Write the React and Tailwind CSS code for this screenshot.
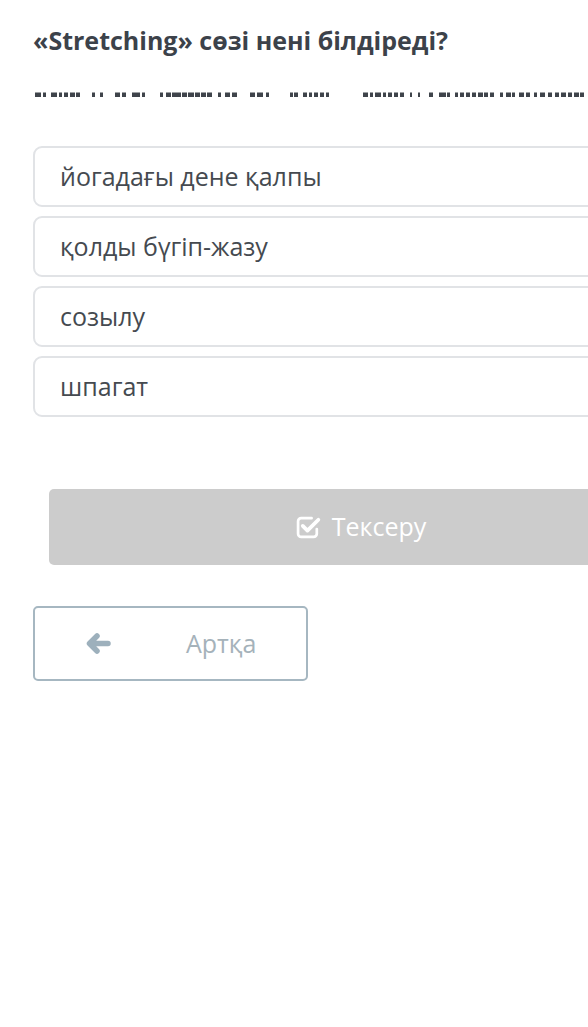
const options = ["йогадағы дене қалпы", "қолды бүгіп-жазу", "созылу", "шпагат"];

// the garbled dashed line under the question
const dashes = [
  [35, 6], [43, 3], [51, 6], [59, 3], [64, 4], [70, 5], [76, 4],
  [92, 3], [100, 3], [115, 5], [122, 4], [132, 8], [142, 3],
  [160, 3], [166, 5], [172, 9], [182, 5], [188, 6], [195, 5], [201, 5], [207, 5],
  [218, 3], [225, 5], [232, 5], [250, 5], [257, 6], [266, 3],
  [290, 3], [294, 4], [303, 4], [309, 3], [314, 4], [320, 4], [326, 3],
  [363, 5], [370, 3], [375, 6], [383, 3], [388, 4], [394, 4], [400, 4],
  [410, 2], [418, 2], [429, 4], [439, 7], [447, 3],
  [455, 3], [460, 4], [466, 4], [472, 4], [478, 5], [484, 4], [490, 4],
  [500, 3], [506, 5], [512, 3], [519, 5], [526, 4], [534, 3], [540, 5],
  [548, 4], [555, 4], [561, 5], [568, 4], [574, 5], [580, 4],
];

function CheckSquare() {
  return (
    <svg width="26" height="25" viewBox="0 0 25 24" fill="none">
      <path
        d="M20 13.5v4.5a3 3 0 0 1-3 3H5a3 3 0 0 1-3-3V6a3 3 0 0 1 3-3h10"
        stroke="white"
        strokeWidth="2.6"
        strokeLinecap="round"
      />
      <path
        d="M6.5 10.5l4.5 4.5L21.5 4.5"
        stroke="white"
        strokeWidth="3.6"
        strokeLinecap="round"
        strokeLinejoin="round"
      />
    </svg>
  );
}

function ArrowLeft() {
  return (
    <svg width="25" height="21" viewBox="0 0 25 21" fill="none">
      <path
        d="M11 3L3.5 10.5L11 18M4 10.5H22"
        stroke="#9db0bc"
        strokeWidth="5.5"
        strokeLinecap="round"
        strokeLinejoin="round"
      />
    </svg>
  );
}

export default function App() {
  return (
    <div className="w-[588px] h-[1027px] overflow-hidden bg-white" style={{ fontFamily: '"Open Sans", sans-serif' }}>
      <div className="pl-[33px] pt-[24px]">
        <h1 className="text-[25px] leading-[33px] font-bold text-[#3c424a] whitespace-nowrap">
          «Stretching» сөзі нені білдіреді?
        </h1>
      </div>

      <svg width="588" height="6" viewBox="0 0 588 6" className="mt-[35px] block">
        {dashes.map(([x, w], i) => (
          <rect key={i} x={x} y="0.5" width={w} height="4.5" fill="#3f444b" />
        ))}
      </svg>

      <div className="pl-[33px] mt-[48px] w-[689px] flex flex-col gap-[9px]">
        {options.map((o) => (
          <div
            key={o}
            className="h-[61px] flex items-center pl-[25px] border-2 border-[#e1e3e6] rounded-[9px] text-[25px] text-[#454a50]"
          >
            {o}
          </div>
        ))}

        <div className="px-4 mt-[63px]">
          <div className="h-[76px] rounded-[5px] bg-[#cccccc] flex items-center justify-center gap-[10px] text-white text-[25px]">
            <CheckSquare />
            <span>Тексеру</span>
          </div>
        </div>

        <div className="mt-[32px] w-[275px] h-[75px] border-2 border-[#a6b7c1] rounded-[5px] flex items-center pl-[51px] text-[25px] text-[#a5b2ba]">
          <ArrowLeft />
          <span className="ml-[75px]">Артқа</span>
        </div>
      </div>
    </div>
  );
}
